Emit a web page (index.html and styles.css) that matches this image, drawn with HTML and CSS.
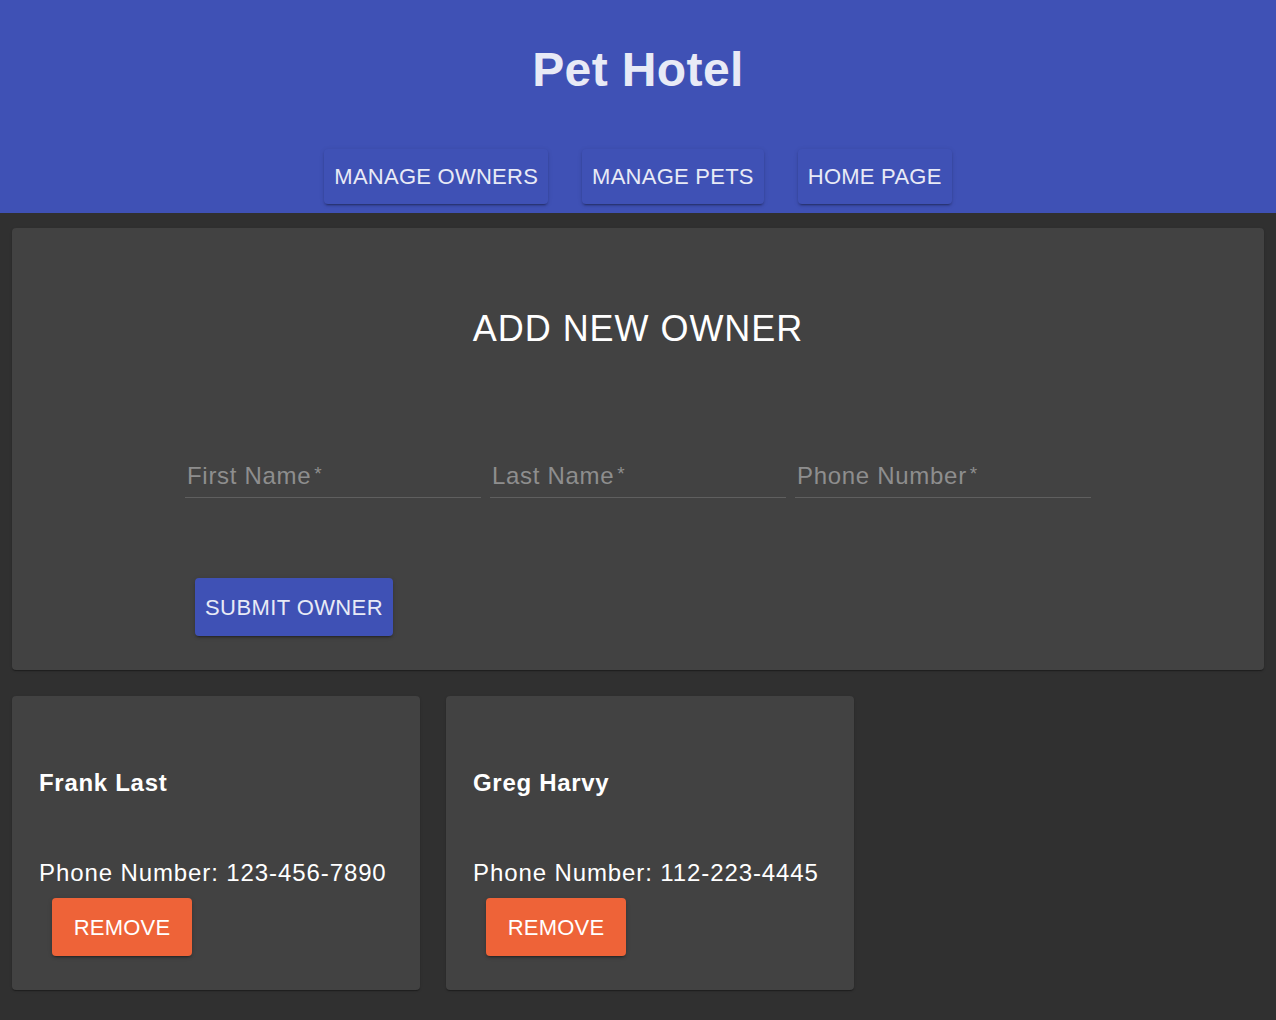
FILE: index.html
```html
<!DOCTYPE html>
<html>
<head>
<meta charset="utf-8">
<link rel="stylesheet" href="styles.css">
</head>
<body>
<header class="app-bar">
  <h1 class="app-title">Pet Hotel</h1>
  <nav class="nav">
    <button class="btn btn-primary nav-btn">MANAGE OWNERS</button>
    <button class="btn btn-primary nav-btn">MANAGE PETS</button>
    <button class="btn btn-primary nav-btn">HOME PAGE</button>
  </nav>
</header>
<main class="content">
  <section class="paper form-card">
    <h2 class="form-title">ADD NEW OWNER</h2>
    <div class="form-body">
      <div class="fields">
        <label class="field"><span class="field-label">First Name<span class="req">*</span></span></label>
        <label class="field"><span class="field-label">Last Name<span class="req">*</span></span></label>
        <label class="field"><span class="field-label">Phone Number<span class="req">*</span></span></label>
      </div>
      <button class="btn btn-primary submit-btn">SUBMIT OWNER</button>
    </div>
  </section>
  <section class="owners">
    <article class="paper owner-card">
      <h3 class="owner-name">Frank Last</h3>
      <p class="owner-phone">Phone Number: 123-456-7890</p>
      <button class="btn btn-danger remove-btn">REMOVE</button>
    </article>
    <article class="paper owner-card">
      <h3 class="owner-name">Greg Harvy</h3>
      <p class="owner-phone">Phone Number: 112-223-4445</p>
      <button class="btn btn-danger remove-btn">REMOVE</button>
    </article>
  </section>
</main>
</body>
</html>
```
FILE: styles.css
```css
* { box-sizing: border-box; }
html, body {
  margin: 0;
  padding: 0;
  background: #303030;
  font-family: "Liberation Sans", Arial, Helvetica, sans-serif;
  color: #ffffff;
}
.app-bar {
  background: #3f51b5;
  height: 213px;
  display: flex;
  flex-direction: column;
  align-items: center;
}
.app-title {
  margin: 42px 0 0;
  font-size: 48px;
  line-height: 56px;
  font-weight: 700;
  letter-spacing: 0.4px;
  color: #e8eaf6;
}
.nav {
  margin-top: 51px;
  display: flex;
  gap: 34px;
}
.btn {
  font-family: "Liberation Sans", Arial, Helvetica, sans-serif;
  font-size: 22px;
  line-height: 27px;
  border: none;
  border-radius: 4px;
  cursor: pointer;
  letter-spacing: 0.4px;
  box-shadow: 0 3px 1px -2px rgba(0,0,0,0.2), 0 2px 2px 0 rgba(0,0,0,0.14), 0 1px 5px 0 rgba(0,0,0,0.12);
}
.btn-primary {
  background: #3f51b5;
  color: #e8eaf6;
}
.btn-danger {
  background: #ee6338;
  color: #ffffff;
}
.nav-btn {
  height: 55px;
  padding: 0 10px;
  letter-spacing: 0.25px;
}
.content {
  padding: 15px 12px 20px;
}
.paper {
  background: #424242;
  border-radius: 4px;
  box-shadow: 0 2px 1px -1px rgba(0,0,0,0.2), 0 1px 1px 0 rgba(0,0,0,0.14), 0 1px 3px 0 rgba(0,0,0,0.12);
}
.form-card {
  padding: 80px 0 34px;
  display: flex;
  flex-direction: column;
  align-items: center;
}
.form-title {
  margin: 0;
  font-size: 36px;
  line-height: 42px;
  font-weight: 400;
  letter-spacing: 0.95px;
  color: #ffffff;
}
.form-body {
  margin-top: 112px;
  display: flex;
  flex-direction: column;
  align-items: flex-start;
}
.fields {
  display: flex;
  gap: 9px;
}
.field {
  width: 296px;
  height: 36px;
  border-bottom: 1px solid #5f5f5f;
  padding-left: 2px;
}
.field-label {
  font-size: 24px;
  line-height: 28px;
  letter-spacing: 0.7px;
  color: #8e8e8e;
}
.req {
  font-size: 19px;
  line-height: 19px;
  vertical-align: top;
  margin-left: 3px;
  position: relative;
  top: 2px;
}
.submit-btn {
  margin: 80px 0 0 10px;
  height: 58px;
  padding: 0 10px;
  width: 198px;
}
.owners {
  margin-top: 26px;
  display: flex;
  gap: 26px;
}
.owner-card {
  width: 408px;
  padding: 73px 27px 34px;
}
.owner-name {
  margin: 0;
  font-size: 24px;
  line-height: 28px;
  font-weight: 700;
  letter-spacing: 0.7px;
}
.owner-phone {
  margin: 62px 0 0;
  font-size: 24px;
  line-height: 28px;
  font-weight: 400;
  letter-spacing: 0.9px;
}
.remove-btn {
  margin: 11px 0 0 13px;
  height: 58px;
  width: 140px;
  padding: 0;
  letter-spacing: 0.2px;
}
```
